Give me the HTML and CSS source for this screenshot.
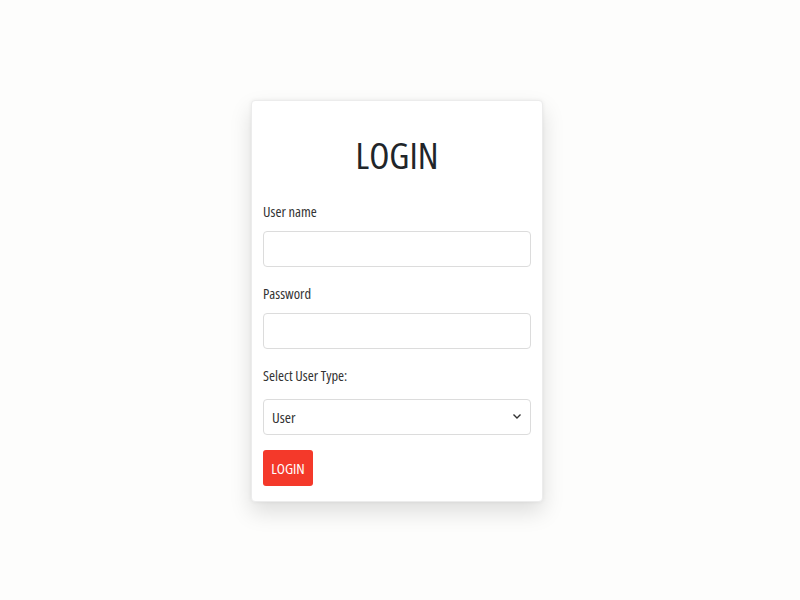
FILE: index.html
```html
<!DOCTYPE html>
<html lang="en">
<head>
    <meta charset="UTF-8">
    <meta name="viewport" content="width=device-width, initial-scale=1.0">
    <title>Login</title>
    <link rel="stylesheet" href="styles.css">
</head>
<body>
    <div id="login-card">
        <h1>LOGIN</h1>
        <form id="login-form">
            <div class="field">
                <label for="username">User name</label>
                <input type="text" id="username">
            </div>
            <div class="field">
                <label for="password">Password</label>
                <input type="password" id="password">
            </div>
            <div class="field field-select">
                <label for="usertype">Select User Type:</label>
                <div class="select-wrap">
                    <select id="usertype">
                        <option value="user">User</option>
                        <option value="admin">Admin</option>
                    </select>
                    <svg class="chevron" width="10" height="8" viewBox="0 0 10 8"><path d="M1.5 2.5 L5 6 L8.5 2.5" fill="none" stroke="#333" stroke-width="1.4"/></svg>
                </div>
            </div>
            <button type="submit">LOGIN</button>
        </form>
    </div>
</body>
</html>
```

FILE: styles.css
```css
body {
    font-family: "Open Sans", "Noto Sans", sans-serif;
    font-stretch: 75%;
    background-color: #fdfdfc;
    margin: 0;
    min-height: 100vh;
    box-sizing: border-box;
    display: flex;
    justify-content: center;
    align-items: flex-start;
    padding: 100px 6px 0 0;
    color: #212529;
}
#login-card {
    width: 268px;
    padding: 11px 11px 15px 11px;
    background-color: #fff;
    border: 1px solid #ececec;
    border-radius: 4px;
    box-shadow: 0 0 4px rgba(0, 0, 0, 0.06), 0 10px 22px rgba(0, 0, 0, 0.13);
}
h1 {
    font-weight: 400;
    font-size: 37px;
    text-align: center;
    margin: 20px 0 24px 0;
    line-height: 46px;
}
.field {
    margin-bottom: 17px;
}
.field-select {
    margin-bottom: 15px;
}
label {
    display: block;
    font-size: 14.5px;
    line-height: 20px;
    margin-bottom: 9px;
    color: #333;
}
.field-select label {
    margin-bottom: 13px;
}
input, select {
    box-sizing: border-box;
    width: 100%;
    height: 36px;
    border: 1px solid #dcdcdc;
    border-radius: 4px;
    background-color: #fff;
    font-family: inherit;
    font-stretch: 75%;
    font-size: 15px;
    padding: 0 8px;
    color: #333;
}
.select-wrap {
    position: relative;
}
select {
    appearance: none;
    -webkit-appearance: none;
}
.chevron {
    position: absolute;
    right: 9px;
    top: 13px;
}
button {
    background-color: #f4392a;
    color: #fff;
    border: none;
    border-radius: 3px;
    font-family: inherit;
    font-stretch: 75%;
    font-size: 15px;
    width: 50px;
    height: 36px;
    padding: 0;
    cursor: pointer;
}
```
